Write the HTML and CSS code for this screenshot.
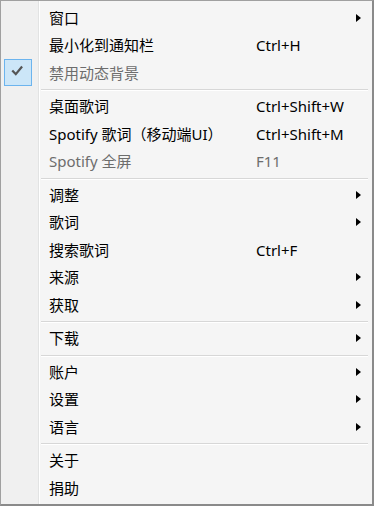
FILE: index.html
```html
<!DOCTYPE html>
<html lang="zh-CN">
<head>
<meta charset="utf-8">
<title>Menu</title>
<link rel="stylesheet" href="styles.css">
</head>
<body>
<div class="menu">
  <div class="item"><span class="cell"></span><span class="label">窗口</span><span class="key"></span><span class="arrow"><i class="tri"></i></span></div>
  <div class="item"><span class="cell"></span><span class="label">最小化到通知栏</span><span class="key">Ctrl+H</span><span class="arrow"></span></div>
  <div class="item disabled"><span class="cell"><span class="check"><svg viewBox="0 0 28 27" width="28" height="27"><path d="M9 12.2 L11.8 15.2 L17.4 8.4" fill="none" stroke="#555" stroke-width="2.2" stroke-linecap="square"/></svg></span></span><span class="label">禁用动态背景</span><span class="key"></span><span class="arrow"></span></div>
  <div class="sep"></div>
  <div class="item"><span class="cell"></span><span class="label">桌面歌词</span><span class="key">Ctrl+Shift+W</span><span class="arrow"></span></div>
  <div class="item"><span class="cell"></span><span class="label">Spotify 歌词（移动端UI）</span><span class="key">Ctrl+Shift+M</span><span class="arrow"></span></div>
  <div class="item disabled"><span class="cell"></span><span class="label">Spotify 全屏</span><span class="key">F11</span><span class="arrow"></span></div>
  <div class="sep"></div>
  <div class="item"><span class="cell"></span><span class="label">调整</span><span class="key"></span><span class="arrow"><i class="tri"></i></span></div>
  <div class="item"><span class="cell"></span><span class="label">歌词</span><span class="key"></span><span class="arrow"><i class="tri"></i></span></div>
  <div class="item"><span class="cell"></span><span class="label">搜索歌词</span><span class="key">Ctrl+F</span><span class="arrow"></span></div>
  <div class="item"><span class="cell"></span><span class="label">来源</span><span class="key"></span><span class="arrow"><i class="tri"></i></span></div>
  <div class="item"><span class="cell"></span><span class="label">获取</span><span class="key"></span><span class="arrow"><i class="tri"></i></span></div>
  <div class="sep"></div>
  <div class="item"><span class="cell"></span><span class="label">下载</span><span class="key"></span><span class="arrow"><i class="tri"></i></span></div>
  <div class="sep"></div>
  <div class="item"><span class="cell"></span><span class="label">账户</span><span class="key"></span><span class="arrow"><i class="tri"></i></span></div>
  <div class="item"><span class="cell"></span><span class="label">设置</span><span class="key"></span><span class="arrow"><i class="tri"></i></span></div>
  <div class="item"><span class="cell"></span><span class="label">语言</span><span class="key"></span><span class="arrow"><i class="tri"></i></span></div>
  <div class="sep"></div>
  <div class="item"><span class="cell"></span><span class="label">关于</span><span class="key"></span><span class="arrow"></span></div>
  <div class="item"><span class="cell"></span><span class="label">捐助</span><span class="key"></span><span class="arrow"></span></div>
</div>
</body>
</html>
```
FILE: styles.css
```css
html, body {
  margin: 0;
  padding: 0;
  background: #ffffff;
}
.menu {
  box-sizing: border-box;
  width: 374px;
  height: 506px;
  border: 1px solid #a0a0a0;
  border-right: 2px solid #8a8a8a;
  border-bottom: 2px solid #8a8a8a;
  padding: 3px 0 2px 0;
  background:
    linear-gradient(to right, #f0f0f0 0, #f0f0f0 37px, #e2e3e3 37px, #e2e3e3 38px, #ffffff 38px, #ffffff 39px, #f5f5f5 39px);
  font-family: "Noto Sans", "Noto Sans CJK SC", sans-serif;
  font-size: 15px;
  color: #000;
}
.item {
  display: grid;
  grid-template-columns: 48px 207px 1fr 21px;
  height: 27.5px;
  align-items: center;
  line-height: 20px;
}
.item.disabled {
  color: #6d6d6d;
}
.cell {
  display: flex;
  align-items: center;
  height: 100%;
}
.check {
  box-sizing: border-box;
  margin-left: 3px;
  width: 28px;
  height: 27px;
  border: 1px solid #6cb4ee;
  background: #cce6f8;
  display: flex;
  align-items: center;
  justify-content: center;
}
.check svg {
  display: block;
  flex: none;
  margin: -1px;
}
.label {
  white-space: nowrap;
}
.key {
  white-space: nowrap;
}
.arrow {
  display: flex;
  align-items: center;
  height: 100%;
}
.tri {
  display: block;
  width: 0;
  height: 0;
  margin-left: 5px;
  border-top: 4.5px solid transparent;
  border-bottom: 4.5px solid transparent;
  border-left: 5px solid #000;
}
.sep {
  height: 6px;
  display: flex;
  align-items: center;
  padding-left: 40px;
  padding-right: 4px;
}
.sep::before {
  content: "";
  display: block;
  flex: 1;
  height: 1px;
  background: #d7d7d7;
  box-shadow: 0 1px 0 #ffffff;
}
```
